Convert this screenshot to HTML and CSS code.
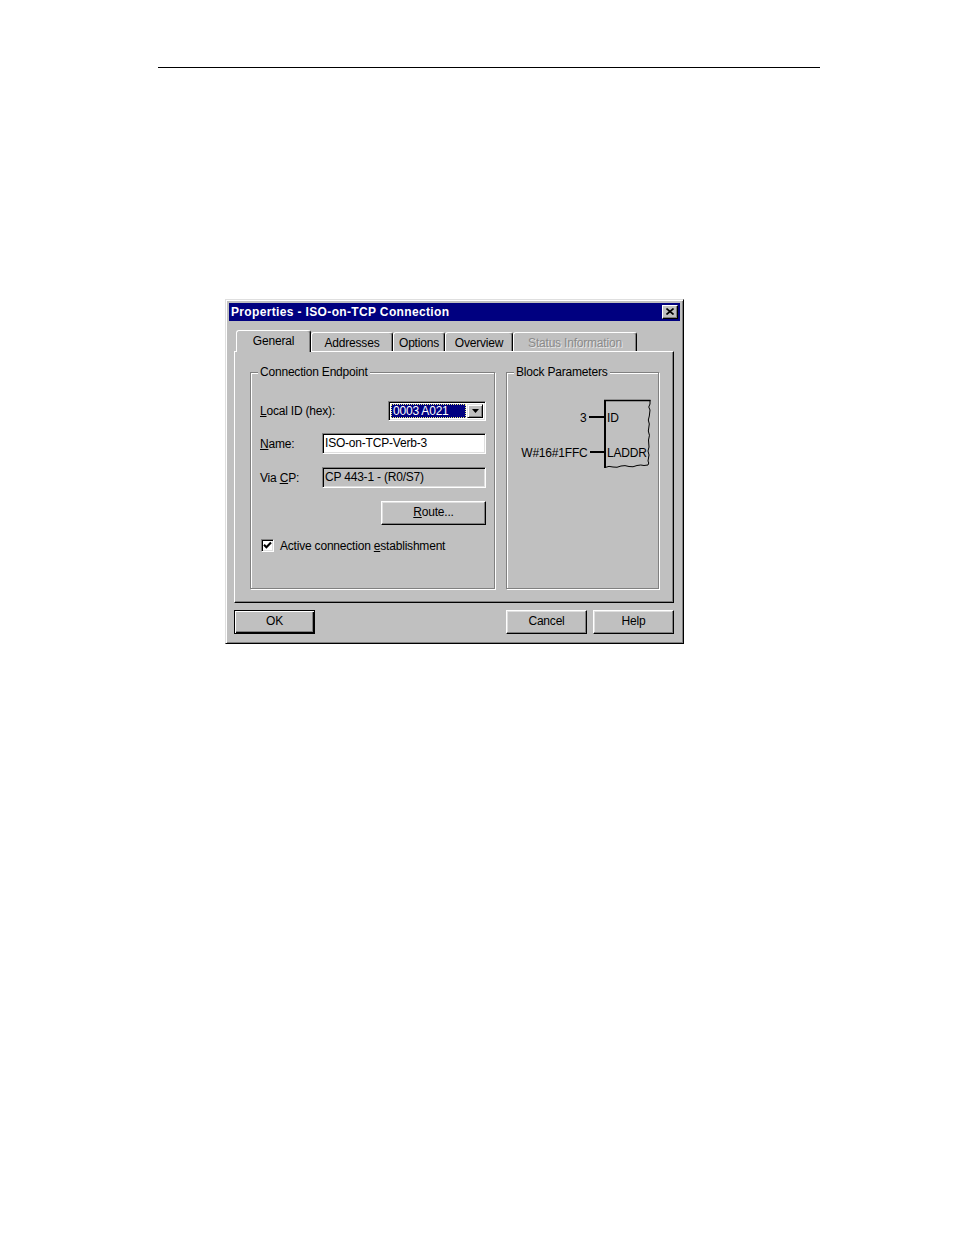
FILE: index.html
```html
<!DOCTYPE html>
<html>
<head>
<meta charset="utf-8">
<title>Properties - ISO-on-TCP Connection</title>
<link rel="stylesheet" href="styles.css">
</head>
<body>
<div class="page">
  <div class="rule"></div>
  <div class="dialog">
    <div class="titlebar">
      <span class="title">Properties - ISO-on-TCP Connection</span>
      <span class="close">
        <svg width="8" height="7" viewBox="0 0 8 7"><path d="M0.5 0.5 L7.5 6.5 M7.5 0.5 L0.5 6.5" stroke="#000" stroke-width="1.6" fill="none"/></svg>
      </span>
    </div>
    <div class="client">
      <div class="tabs">
        <div class="tab active w-general">General</div>
        <div class="tab w-addr">Addresses</div>
        <div class="tab w-opt">Options</div>
        <div class="tab w-over">Overview</div>
        <div class="tab w-status disabled">Status Information</div>
      </div>
      <div class="panel">
        <div class="group g1">
          <span class="legend">Connection Endpoint</span>
          <div class="row r1">
            <span class="lbl"><u>L</u>ocal ID (hex):</span>
            <div class="combo">
              <span class="sel">0003 A021</span>
              <span class="drop"><svg width="7" height="4" viewBox="0 0 7 4"><path d="M0 0 H7 L3.5 4 Z" fill="#000"/></svg></span>
            </div>
          </div>
          <div class="row r2">
            <span class="lbl"><u>N</u>ame:</span>
            <div class="field">ISO-on-TCP-Verb-3</div>
          </div>
          <div class="row r3">
            <span class="lbl">Via <u>C</u>P:</span>
            <div class="field ro">CP 443-1 - (R0/S7)</div>
          </div>
          <div class="row r4">
            <div class="btn route"><u>R</u>oute...</div>
          </div>
          <div class="row r5">
            <span class="check"><svg width="9" height="9" viewBox="0 0 9 9"><path d="M1 3.8 L3.4 6.3 L8 1.5" stroke="#000" stroke-width="2.1" fill="none"/></svg></span>
            <span class="chklbl">Active connection <u>e</u>stablishment</span>
          </div>
        </div>
        <div class="group g2">
          <span class="legend">Block Parameters</span>
          <svg class="diagram" width="143" height="76" viewBox="0 0 143 76">
            <rect x="92" y="5" width="2" height="68" fill="#000"/>
            <path d="M92 5.5 H138.5" stroke="#000" stroke-width="1.3" fill="none"/>
            <path d="M138 5 L138 9 Q135.5 12 138 15 L137.3 21 Q135.3 25 137.3 29 L136.3 36 Q138.5 40 136.5 45 L137 52 Q135 56 137 60 L136 66 Q137.5 68 136 70" stroke="#000" stroke-width="1" fill="none"/>
            <path d="M93 72.5 Q97 70.5 101 72 Q105 73 109 71 Q113 70 117 71.5 Q121 72.5 125 70.5 Q129 69.5 132 70.5 L136 70" stroke="#000" stroke-width="1" fill="none"/>
            <rect x="77" y="21" width="15" height="2" fill="#000"/>
            <rect x="78" y="56" width="14" height="2" fill="#000"/>
            <text x="74.5" y="26.5" text-anchor="end" class="dtext">3</text>
            <text x="95" y="26.5" class="dtext">ID</text>
            <text x="75.5" y="61.5" text-anchor="end" class="dtext">W#16#1FFC</text>
            <text x="95" y="61.5" class="dtext">LADDR</text>
          </svg>
        </div>
      </div>
      <div class="buttons">
        <div class="btn default">OK</div>
        <div class="btn cancel">Cancel</div>
        <div class="btn help">Help</div>
      </div>
    </div>
  </div>
</div>
</body>
</html>
```

FILE: styles.css
```css
html, body {
  margin: 0;
  padding: 0;
  background: #fff;
}
body {
  font-family: "Liberation Sans", Arial, sans-serif;
  font-size: 12px;
  letter-spacing: -0.2px;
  color: #000;
}
.page {
  width: 954px;
  height: 1235px;
  overflow: hidden;
}
.rule {
  margin: 67px 0 0 158px;
  width: 662px;
  height: 1px;
  background: #000;
}
.dialog {
  margin: 231px 0 0 225px;
  width: 459px;
  height: 345px;
  box-sizing: border-box;
  background: #c0c0c0;
  border: 1px solid;
  border-color: #dfdfdf #000 #000 #dfdfdf;
  box-shadow: inset 1px 1px #fff, inset -1px -1px #808080;
  padding: 3px;
  display: flex;
  flex-direction: column;
}
.titlebar {
  height: 18px;
  background: #000080;
  display: flex;
  align-items: center;
  padding-left: 2px;
}
.title {
  color: #fff;
  font-weight: bold;
  font-size: 12px;
  letter-spacing: 0.35px;
  flex: 1;
  line-height: 14px;
}
.close {
  width: 16px;
  height: 14px;
  box-sizing: border-box;
  margin-right: 2px;
  background: #c0c0c0;
  border: 1px solid;
  border-color: #fff #000 #000 #fff;
  box-shadow: inset -1px -1px #808080;
  display: flex;
  align-items: center;
  justify-content: center;
  padding: 0 1px 1px 0;
}
.close svg { display: block; }
.client {
  flex: 1;
  padding: 9px 6px 0 5px;
  display: flex;
  flex-direction: column;
}
.tabs {
  display: flex;
  align-items: flex-end;
  height: 21px;
  padding-left: 2px;
}
.tab {
  height: 19px;
  box-sizing: border-box;
  border: 1px solid;
  border-bottom: none;
  border-color: #fff #000 transparent #fff;
  border-radius: 3px 3px 0 0;
  box-shadow: inset -1px 0 #808080;
  background: #c0c0c0;
  text-align: center;
  padding-top: 3px;
  line-height: 14px;
  white-space: nowrap;
}
.tab.active {
  height: 22px;
  margin-bottom: -1px;
  position: relative;
  z-index: 1;
  padding-top: 3px;
}
.tab.disabled {
  color: #8a8a8a;
  text-shadow: 1px 1px 0 #e6e6e6;
}
.w-general { width: 75px; }
.w-addr { width: 82px; }
.w-opt { width: 52px; }
.w-over { width: 68px; }
.w-status { width: 124px; }
.panel {
  height: 252px;
  box-sizing: border-box;
  border: 1px solid;
  border-color: #fff #000 #000 #fff;
  box-shadow: inset -1px -1px #808080;
  padding: 20px 14px 13px 15px;
  display: flex;
  gap: 11px;
}
.group {
  position: relative;
  box-sizing: border-box;
  border: 1px solid #808080;
  box-shadow: inset 1px 1px #fff, 1px 1px #fff;
}
.g1 {
  width: 245px;
  padding: 28px 8px 0 9px;
  display: flex;
  flex-direction: column;
}
.g2 {
  width: 153px;
  padding: 22px 0 0 5px;
}
.legend {
  position: absolute;
  top: -8px;
  left: 7px;
  padding: 0 2px;
  background: #c0c0c0;
  line-height: 14px;
  white-space: nowrap;
}
.row {
  display: flex;
  align-items: center;
}
.r1 { height: 20px; }
.r2 { height: 21px; margin-top: 12px; }
.r3 { height: 21px; margin-top: 13px; }
.r4 { height: 24px; margin-top: 13px; justify-content: flex-end; }
.r5 { height: 13px; margin-top: 14px; }
.lbl { white-space: nowrap; }
.combo {
  margin-left: auto;
  width: 98px;
  height: 20px;
  box-sizing: border-box;
  border: 1px solid;
  border-color: #808080 #fff #fff #808080;
  box-shadow: inset 1px 1px #000, inset -1px -1px #dfdfdf;
  background: #fff;
  padding: 2px;
  display: flex;
  align-items: stretch;
}
.sel {
  flex: 1;
  margin-right: 1px;
  background: #000080;
  color: #fff;
  border: 1px dotted #f0f080;
  line-height: 12px;
  padding-left: 1px;
  white-space: nowrap;
  overflow: hidden;
}
.drop {
  width: 16px;
  box-sizing: border-box;
  background: #c0c0c0;
  border: 1px solid;
  border-color: #dfdfdf #000 #000 #dfdfdf;
  box-shadow: inset 1px 1px #fff, inset -1px -1px #808080;
  display: flex;
  align-items: center;
  justify-content: center;
}
.drop svg { display: block; }
.field {
  margin-left: auto;
  width: 164px;
  height: 21px;
  box-sizing: border-box;
  border: 1px solid;
  border-color: #808080 #fff #fff #808080;
  box-shadow: inset 1px 1px #000, inset -1px -1px #dfdfdf;
  background: #fff;
  padding: 1px 0 0 2px;
  line-height: 17px;
  white-space: nowrap;
}
.field.ro { background: #c0c0c0; }
.btn {
  box-sizing: border-box;
  height: 24px;
  background: #c0c0c0;
  border: 1px solid;
  border-color: #fff #000 #000 #fff;
  box-shadow: inset -1px -1px #808080, inset 1px 1px #dfdfdf;
  text-align: center;
  line-height: 21px;
  white-space: nowrap;
}
.route { width: 105px; }
.check {
  width: 13px;
  height: 13px;
  box-sizing: border-box;
  margin-left: 1px;
  border: 1px solid;
  border-color: #808080 #fff #fff #808080;
  box-shadow: inset 1px 1px #000, inset -1px -1px #dfdfdf;
  background: #fff;
  display: flex;
  align-items: center;
  justify-content: center;
}
.check svg { display: block; }
.chklbl {
  margin-left: 6px;
  white-space: nowrap;
}
.diagram { display: block; }
.dtext {
  font-family: "Liberation Sans", Arial, sans-serif;
  font-size: 12px;
  fill: #000;
}
.buttons {
  display: flex;
  margin-top: 7px;
  gap: 6px;
}
.buttons .btn { width: 81px; }
.btn.default {
  border-color: #000;
  box-shadow: inset 1px 1px #fff, inset -1px -1px #000, inset -2px -2px #808080;
}
.btn.cancel { margin-left: auto; }
```
